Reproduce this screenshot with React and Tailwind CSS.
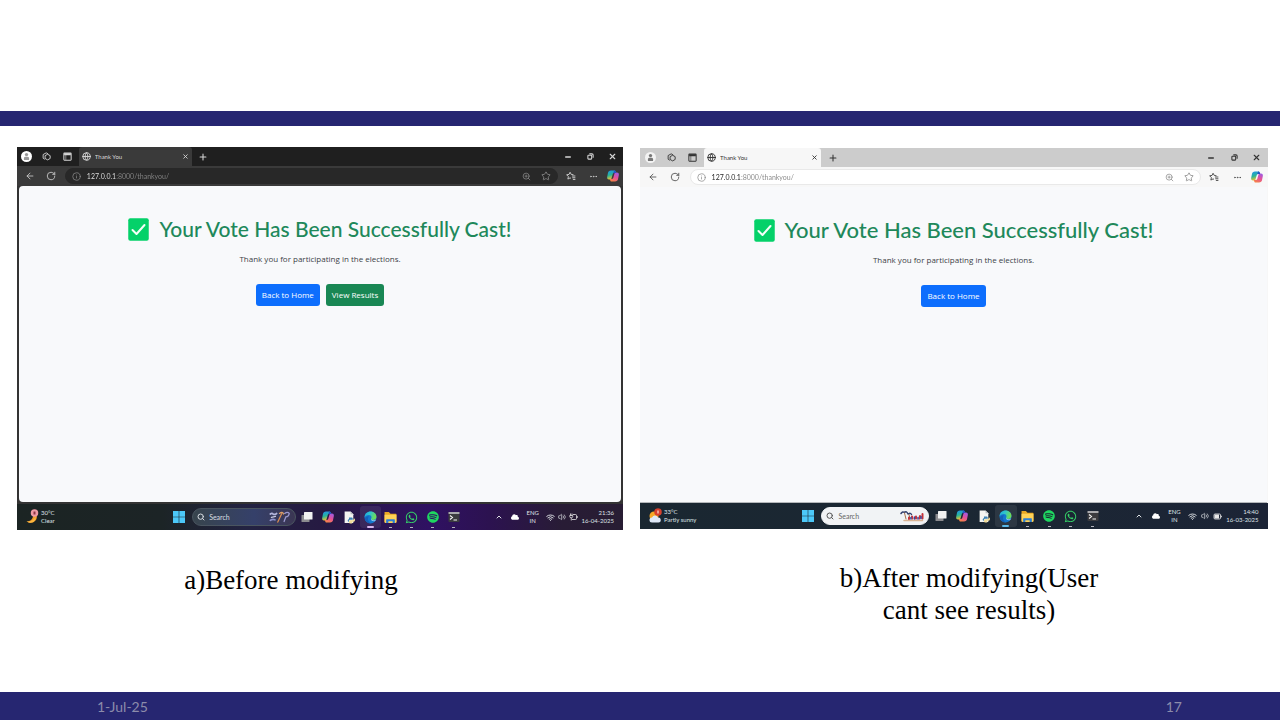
import React, { useId } from "react";
import { ArrowLeft, RotateCw, Info, Globe, X, Plus, Minus, ZoomIn, Star, Ellipsis, Search, ChevronUp, Wifi, Volume2 } from "lucide-react";
import { FaWhatsapp, FaSpotify, FaCloud } from "react-icons/fa";

const themes = {
  dark: {
    frame: "bg-[#333333]",
    tabs: "bg-[#1f1f1f] text-[#d6d6d6]",
    tab: "bg-[#3a3a3a]",
    toolbar: "bg-[#3a3a3a] text-[#cfcfcf]",
    address: "bg-[#282828] border-[#282828] text-[#8a8a8a]",
    url: "bg-[linear-gradient(90deg,#e8e8e8_29px,#858585_29px)]",
    avatar: "bg-white text-[#9a9a9a]",
    page: "mx-[2px] mb-[2px] rounded-[4px] min-h-[316px]",
    taskbar: "bg-[linear-gradient(90deg,#1b2423_0%,#1c2426_24%,#232342_38%,#261a42_50%,#2f1162_68%,#2c1250_78%,#281c35_90%,#281d33_100%)]",
    search: "bg-[linear-gradient(90deg,#38454d,#35406a_60%,#3b3653)] border-[#4a5560] text-[#d8dde2]",
    heading: "text-[21px]",
  },
  light: {
    frame: "bg-[#f7f7f7]",
    tabs: "bg-[#cccccc] text-[#333333]",
    tab: "bg-[#f7f7f7]",
    toolbar: "bg-[#f7f7f7] text-[#4a4a4a]",
    address: "bg-white border-[#e9e9e9] text-[#8c8c8c]",
    url: "bg-[linear-gradient(90deg,#222222_29px,#858585_29px)]",
    avatar: "bg-[#f3f3f3] text-[#777777]",
    page: "mr-px border-b border-[#b5b8bb] min-h-[316px]",
    taskbar: "bg-[linear-gradient(90deg,#1a2731,#1b2733_50%,#1c2436)]",
    search: "bg-[#f1f3f5] border-[#f1f3f5] text-[#555555]",
    heading: "text-[22px]",
  },
};

function Person() {
  return (
    <svg viewBox="0 0 12 12" className="size-[9px]" fill="currentColor" aria-hidden="true">
      <circle cx="6" cy="3.4" r="2.2" />
      <path d="M2.6 10.6V8.2C2.6 6.9 3.6 6.4 6 6.4s3.4.5 3.4 1.8v2.4z" />
    </svg>
  );
}

function Workspaces() {
  return (
    <svg viewBox="0 0 16 16" className="size-[9px]" fill="none" stroke="currentColor" strokeWidth="1.6" strokeLinejoin="round" aria-hidden="true">
      <path d="M2 4.500 7.500 1.500 11 3.500M2 4.500v6.500l3 2" />
      <path d="M5.500 6.500 10 4l4.500 2.500v5L10 14l-4.500-2.500z" />
    </svg>
  );
}

function TabActions() {
  return (
    <svg viewBox="0 0 16 16" className="size-[9px]" fill="none" stroke="currentColor" strokeWidth="1.800" aria-hidden="true">
      <rect x="1.500" y="2" width="13" height="12.500" rx="1" />
      <path d="M2 4h12" strokeWidth="3.500" />
      <path d="M5 5v9" strokeWidth="1" />
    </svg>
  );
}

function Restore() {
  return (
    <svg viewBox="0 0 12 12" className="size-[7px]" fill="none" stroke="currentColor" strokeWidth="1.800" aria-hidden="true">
      <rect x="1.500" y="4" width="6.500" height="6.500" rx="1" />
      <path d="M4 1.500h4.500q2 0 2 2V8" />
    </svg>
  );
}

function FavoritesIcon() {
  return (
    <svg viewBox="0 0 16 16" className="size-[10px]" fill="none" stroke="currentColor" strokeWidth="1.500" strokeLinejoin="round" aria-hidden="true">
      <path d="m8 11.800-1.500-.8L3 12.900l.8-4L1 6l3.800-.5L6.500 2l1.900 3.500L12 6" />
      <path d="M9.500 8H15M10 10.800h5M11 13.500h4" />
    </svg>
  );
}

function Copilot() {
  const id = useId();
  return (
    <svg viewBox="0 0 24 24" className="size-[12px]" aria-hidden="true">
      <defs>
        <linearGradient id={id + "a"} x1="0" y1="0" x2="0.300" y2="1">
          <stop offset="0" stopColor="#1f8ff0" />
          <stop offset="0.550" stopColor="#28b69a" />
          <stop offset="1" stopColor="#f2c230" />
        </linearGradient>
        <linearGradient id={id + "b"} x1="0.700" y1="0" x2="0.300" y2="1">
          <stop offset="0" stopColor="#a05be0" />
          <stop offset="0.500" stopColor="#e5509a" />
          <stop offset="1" stopColor="#f78445" />
        </linearGradient>
      </defs>
      <path d="M8 1h6.500c2 0 2.700 1 3.200 3l.600 2H14c-1.500 0-2.200 1-2.600 2.400L9.300 16c-.600 2-1.600 3-3.500 3H4c-3.200 0-4.200-2.600-3.600-5.400l1.400-7C2.400 3 4.600 1 8 1z" fill={`url(#${id}a)`} />
      <path d="M16 23H9.500c-2 0-2.700-1-3.200-3l-.600-2H10c1.500 0 2.200-1 2.600-2.400L14.700 8c.600-2 1.600-3 3.500-3H20c3.200 0 4.200 2.600 3.600 5.400l-1.400 7C21.600 21 19.400 23 16 23z" fill={`url(#${id}b)`} />
      <path d="M14.500 1c2 0 2.700 1 3.200 3l.600 2H14c-.900 0-1.500.400-2 1z" fill="#2450c8" />
    </svg>
  );
}

function WindowsLogo() {
  return (
    <svg viewBox="0 0 12 12" className="size-[12px]" fill="#4cc8f8" aria-hidden="true">
      <path d="M0 0h5.700v5.700H0zM6.300 0H12v5.700H6.300zM0 6.300h5.700V12H0zM6.300 6.300H12V12H6.300z" />
    </svg>
  );
}

function TaskView() {
  return (
    <svg viewBox="0 0 24 24" className="size-[12px]" aria-hidden="true">
      <rect x="1" y="8" width="16" height="14" rx="1" fill="#8b8b8f" />
      <rect x="6" y="2" width="17" height="15" rx="1" fill="#f1f1f1" />
    </svg>
  );
}

function PythonFile() {
  return (
    <svg viewBox="0 0 24 24" className="size-[13px]" aria-hidden="true">
      <path d="M3 1h11l5 5v16H3z" fill="#f4f4f2" />
      <path d="M14 1v5h5z" fill="#b9bdc2" />
      <path d="M11 12h5c2 0 2 2 2 3v1h-5c-2 0-2 2-2 4-3 0-3-5 0-5z" fill="#3f83b5" />
      <path d="M20 14c3 0 3 5 0 6h-3v3h-4c-2 0-2-2-2-3 0-2 1-3 3-3h3c2 0 3-1 3-3z" fill="#f0dc9a" />
    </svg>
  );
}

function EdgeLogo() {
  const id = useId();
  return (
    <svg viewBox="0 0 24 24" className="size-[13px]" aria-hidden="true">
      <defs>
        <linearGradient id={id} x1="0" y1="0" x2="1" y2="0.300">
          <stop offset="0" stopColor="#1aa8e0" />
          <stop offset="0.500" stopColor="#32c6c8" />
          <stop offset="1" stopColor="#6fdc58" />
        </linearGradient>
      </defs>
      <circle cx="12" cy="12" r="11" fill="#1478cf" />
      <path d="M1 12C1 5 6 1 12 1c7 0 11 5 11 9.500 0 4-3 6-6.500 6-2.500 0-3.500-1-3.500-2 0-.800.800-1.300.800-3C13.800 9 11.500 7.500 9 7.500c-4 0-7 2.500-8 4.500z" fill={`url(#${id})`} />
      <path d="M9 10c-3 3-2 10 4 12.500C7 24 2 19 1.500 14 3 11 6 9.500 9 10z" fill="#1560b8" />
      <path d="M13 14.500c0 1.500 2 3 4.500 3 2 0 4-1 5-2.500-.500 2-2 3-3.500 4-4 0-6.500-1.500-6-4.500z" fill="#c6e6f7" />
    </svg>
  );
}

function Folder() {
  return (
    <svg viewBox="0 0 24 24" className="size-[13px]" aria-hidden="true">
      <path d="M1 2h8l3 3h10q1 0 1 1v15H1z" fill="#e9a825" />
      <path d="M1 7h22v13q0 2-2 2H3q-2 0-2-2z" fill="#ffd257" />
      <path d="M5 15h14q1 0 1 1v6h-4v-3H8v3H4v-6q0-1 1-1z" fill="#2b7fd6" />
    </svg>
  );
}

function Terminal() {
  return (
    <svg viewBox="0 0 24 24" className="size-[12px]" aria-hidden="true">
      <rect x="1" y="2" width="22" height="20" rx="2" fill="#3b3b3f" />
      <rect x="1" y="2" width="22" height="4" rx="1" fill="#a9a9ad" />
      <path d="m4 9 5 4-5 4M11 18h7" fill="none" stroke="#f4f4f4" strokeWidth="2.200" />
    </svg>
  );
}

function Battery({ full }) {
  return full ? (
    <svg viewBox="0 0 18 14" className="w-[9px]" fill="none" stroke="#e8e8e8" strokeWidth="1.600" aria-hidden="true">
      <rect x="2" y="2" width="13" height="10" rx="2" />
      <path d="M17 5.500v3" />
      <rect x="3" y="3" width="9" height="8" fill="#e8e8e8" stroke="none" />
    </svg>
  ) : (
    <svg viewBox="0 0 18 16" className="w-[9px]" fill="none" stroke="#e8e8e8" strokeWidth="1.600" aria-hidden="true">
      <path d="M8 3h5q2 0 2 2v6q0 2-2 2H6M17 6.500v3" />
      <path d="M3 1v4M6 1v4M1.500 5h6v2q0 2.500-3 2.500t-3-2.500zM4.500 10v5" />
    </svg>
  );
}

function Moon() {
  return (
    <svg viewBox="0 0 26 32" className="w-[13px]" aria-hidden="true">
      <path d="M20 8c6 12-4 25-19 17 9 0 14-7 13-14z" fill="#f29a2b" />
      <path d="M1 25c9 1 15-3 18-10 2 8-6 17-18 10z" fill="#fbb83f" />
      <circle cx="17" cy="8" r="7.500" fill="#ef9aa4" />
      <path d="M15 5h4v6h-4z" fill="#8d3444" />
    </svg>
  );
}

function PartlySunny() {
  return (
    <svg viewBox="0 0 26 32" className="w-[13px]" aria-hidden="true">
      <circle cx="10" cy="16" r="9" fill="#f7a928" />
      <path d="M6 29a5 5 0 0 1 0-10 6.500 6.500 0 0 1 12 0 5 5 0 0 1 1 10z" fill="#dfe9f8" />
      <circle cx="18" cy="8" r="7.500" fill="#d8402c" />
      <path d="M17 5h2v6h-2z" fill="#fff" />
    </svg>
  );
}

function SearchArt({ dark }) {
  return dark ? (
    <svg viewBox="0 0 40 24" className="w-[23px] shrink-0" fill="none" strokeWidth="2.200" strokeLinecap="round" aria-hidden="true">
      <path d="M4 7q3-2 5 0t6-1" stroke="#b3b5dc" strokeWidth="3" />
      <path d="M4 18q4-3 8-1" stroke="#8f92cc" strokeWidth="3" />
      <path d="m6 13 7-2" stroke="#c7c8e0" />
      <path d="m17 21 7-15" stroke="#d98d52" />
      <path d="M20 6q5-4 7 1" stroke="#d9a06a" />
      <path d="M29 6q5-4 8 0-1 6-6 6l-3 8" stroke="#9b9ad0" />
    </svg>
  ) : (
    <svg viewBox="0 0 48 24" className="w-[24px] shrink-0" fill="none" strokeLinecap="round" aria-hidden="true">
      <path d="M2 7q3-5 7-2M9 5q4-4 7 3M17 8q4-3 6 1" stroke="#33406e" strokeWidth="3" />
      <path d="m9 6 3 12M18 9l2 8" stroke="#a5714d" strokeWidth="2" />
      <path d="M8 21h37" stroke="#d9b494" strokeWidth="3" />
      <path d="M18 18v-3M25 17l-1-4M32 17v-4M39 17l1-5M45 17V8" stroke="#c4323a" strokeWidth="4" />
      <path d="M22 18v-3M29 18v-4M36 18v-3M42 17v-4" stroke="#35459b" strokeWidth="3" />
    </svg>
  );
}

function CheckMark() {
  return (
    <svg viewBox="0 0 42 46" className="w-[21px] shrink-0" aria-hidden="true">
      <rect x="0.500" y="0.500" width="41" height="45" rx="4" fill="#04d169" />
      <path d="m9 24 8 8 16-18" fill="none" stroke="#f4fff8" strokeWidth="4" strokeLinecap="round" strokeLinejoin="round" />
    </svg>
  );
}

const apps = {
  task: { label: "Task view", icon: <TaskView /> },
  copilot: { label: "Copilot", icon: <Copilot /> },
  python: { label: "Python file", icon: <PythonFile /> },
  edge: { label: "Edge", icon: <EdgeLogo />, active: true },
  files: { label: "File Explorer", icon: <Folder />, open: true },
  whatsapp: { label: "WhatsApp", icon: <FaWhatsapp className="size-[13px] text-[#35d268]" />, open: true },
  spotify: { label: "Spotify", icon: <FaSpotify className="size-[12px] text-[#1ed760]" />, open: true },
  terminal: { label: "Terminal", icon: <Terminal />, open: true },
};

const cell = "flex min-w-0 items-center justify-center";

function BrowserBars({ t }) {
  return (
    <header>
      <div className={`grid h-[19px] grid-cols-[33fr_33fr_36fr_187fr_36fr_567fr_36fr_36fr_36fr] ${t.tabs}`}>
        <button aria-label="Profile" className={cell}>
          <span className={`flex size-[11px] shrink-0 items-center justify-center rounded-full ${t.avatar}`}><Person /></span>
        </button>
        <button aria-label="Workspaces" className={cell}><Workspaces /></button>
        <button aria-label="Tab actions" className={cell}><TabActions /></button>
        <div className={`flex min-w-0 items-center gap-1 rounded-t-[3px] px-[3px] ${t.tab}`}>
          <Globe className="size-[9px] shrink-0" strokeWidth={2.5} />
          <span className="flex-1 truncate text-[6px] leading-[10px]">Thank You</span>
          <button aria-label="Close tab"><X className="size-[7px]" strokeWidth={3} /></button>
        </div>
        <button aria-label="New tab" className={cell}><Plus className="size-[10px]" strokeWidth={2.5} /></button>
        <span />
        <button aria-label="Minimize" className={cell}><Minus className="size-[8px]" strokeWidth={4} /></button>
        <button aria-label="Restore" className={cell}><Restore /></button>
        <button aria-label="Close window" className={cell}><X className="size-[9px]" strokeWidth={3} /></button>
      </div>
      <div className={`grid h-[20px] grid-cols-[42fr_28fr_9fr_814fr_43fr_30fr_34fr] ${t.toolbar}`}>
        <button aria-label="Back" className={cell}><ArrowLeft className="size-[10px]" /></button>
        <button aria-label="Reload" className={cell}><RotateCw className="size-[10px]" /></button>
        <span />
        <div className={`my-[2px] flex min-w-0 items-center gap-[6px] rounded-full border px-[6px] ${t.address}`}>
          <Info className="size-[9px] shrink-0" />
          <input aria-label="Address" defaultValue="127.0.0.1:8000/thankyou/" className={`min-w-0 flex-1 bg-clip-text text-[7px] leading-[10px] text-transparent outline-none ${t.url}`} />
          <button aria-label="Zoom"><ZoomIn className="size-[9px]" /></button>
          <button aria-label="Add to favorites" className="ml-1"><Star className="size-[10px]" /></button>
        </div>
        <button aria-label="Favorites" className={cell}><FavoritesIcon /></button>
        <button aria-label="More" className={cell}><Ellipsis className="size-[9px]" /></button>
        <button aria-label="Copilot" className={cell}><Copilot /></button>
      </div>
    </header>
  );
}

function Taskbar({ t, dark, temperature, weather, order, time, date }) {
  return (
    <footer className={`grid h-[26px] grid-cols-[258fr_31fr_171fr_278fr_43fr_28fr_24fr_36fr_22fr_18fr_20fr_56fr_15fr] text-[6px] text-[#dfe3e6] ${t.taskbar}`}>
      <div className="flex min-w-0 items-center gap-[2px] pl-[9px]">
        {dark ? <Moon /> : <PartlySunny />}
        <div className="leading-[8px]">
          <p>{temperature}</p>
          <p>{weather}</p>
        </div>
      </div>
      <button aria-label="Start" className="flex min-w-0 items-center"><WindowsLogo /></button>
      <div className={`my-[4px] flex min-w-0 items-center gap-1 rounded-full border px-1 ${t.search}`}>
        <Search className="size-[8px] shrink-0" strokeWidth={3} />
        <input aria-label="Search" placeholder="Search" className={`min-w-0 flex-1 text-[7px] leading-[10px] outline-none ${dark ? "placeholder:text-[#d8dde2]" : "placeholder:text-[#666666]"}`} />
        <SearchArt dark={dark} />
      </div>
      <nav aria-label="Apps" className="flex min-w-0 pl-px">
        {order.map((key) => {
          const app = apps[key];
          return (
            <button key={key} aria-label={app.label} className={`relative flex-1 ${cell} my-[2px] rounded-[3px] ${app.active ? "bg-white/8" : ""}`}>
              {app.icon}
              {app.active && <span className={`absolute inset-x-1/3 bottom-0 h-[2px] rounded-full ${dark ? "bg-[#d9b8f0]" : "bg-[#59b9ea]"}`} />}
              {app.open && <span className="absolute bottom-0 h-px w-[3px] bg-[#b4b4bc]" />}
            </button>
          );
        })}
      </nav>
      <span />
      <button aria-label="Show hidden icons" className={cell}><ChevronUp className="size-[8px]" strokeWidth={3} /></button>
      <span className={cell}><FaCloud className="size-[8px] text-white" /></span>
      <span className={`${cell} text-center leading-[8px]`}>ENG<br />IN</span>
      <span className={cell}><Wifi className="size-[9px]" strokeWidth={2.5} /></span>
      <span className={cell}><Volume2 className="size-[8px]" /></span>
      <span className={cell}><Battery full={!dark} /></span>
      <div className="flex min-w-0 items-center justify-end text-right leading-[8px] whitespace-nowrap">
        <div>
          <p>{time}</p>
          <p>{date}</p>
        </div>
      </div>
    </footer>
  );
}

function Screen({ theme, showResults, ...taskbar }) {
  const t = themes[theme];
  const button = "flex h-[22px] items-center rounded-[3px] px-[6px] text-white";
  return (
    <section className={`font-["Lato","Open_Sans",sans-serif] text-[8px] leading-[12px] ${t.frame}`}>
      <BrowserBars t={t} />
      <div className={`flex flex-col items-center bg-[#f8f9fb] pt-[27px] font-["Open_Sans",sans-serif] ${t.page}`}>
        <h1 className={`flex items-center gap-[10px] font-["Lato",sans-serif] leading-[32px] font-medium whitespace-nowrap text-[#20885a] ${t.heading}`}>
          <CheckMark />
          Your Vote Has Been Successfully Cast!
        </h1>
        <p className="mt-[8px] text-[#3c4146]">Thank you for participating in the elections.</p>
        <div className="mt-[19px] flex gap-[6px]">
          <a href="#home" className={`${button} bg-[#0d6efd]`}>Back to Home</a>
          {showResults && <a href="#results" className={`${button} bg-[#198754]`}>View Results</a>}
        </div>
      </div>
      <Taskbar t={t} dark={theme === "dark"} {...taskbar} />
    </section>
  );
}

export default function App() {
  return (
    <div className="flex min-h-screen flex-col bg-white">
      <div className="mt-[111px] h-[15px] bg-[#262671]" />
      <main className='grid flex-1 grid-cols-[606fr_628fr] gap-[17px] pt-[21px] pr-3 pl-[17px] font-["Liberation_Serif",serif] text-[27px] leading-[32px] text-black'>
        <figure className="min-w-0">
          <Screen
            theme="dark"
            showResults
            temperature="30°C"
            weather="Clear"
            order={["task", "copilot", "python", "edge", "files", "whatsapp", "spotify", "terminal"]}
            time="21:36"
            date="16-04-2025"
          />
          <figcaption className="mt-[34px] pr-[58px] text-center">a)Before modifying</figcaption>
        </figure>
        <figure className="min-w-0 pt-px">
          <Screen
            theme="light"
            temperature="33°C"
            weather="Partly sunny"
            order={["task", "copilot", "python", "edge", "files", "spotify", "whatsapp", "terminal"]}
            time="14:40"
            date="16-03-2025"
          />
          <figcaption className="mt-[33px] pl-[30px] text-center">
            <span className="mx-auto block max-w-[280px]">b)After modifying(User cant see results)</span>
          </figcaption>
        </figure>
      </main>
      <footer className='flex h-7 items-center justify-between bg-[#262671] pr-[98px] pl-[97px] font-["Lato",sans-serif] text-[14px] text-[#8c8cab]'>
        <span>1-Jul-25</span>
        <span>17</span>
      </footer>
    </div>
  );
}
